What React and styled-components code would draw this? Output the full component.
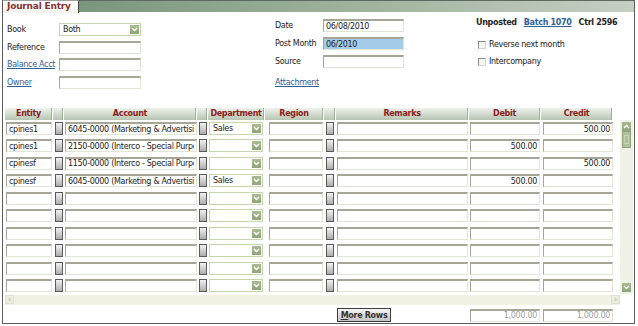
import React from "react";
import styled, { createGlobalStyle } from "styled-components";

const GlobalStyle = createGlobalStyle`
  body {
    margin: 0;
    background: #fff;
    font-family: "DejaVu Sans", Verdana, sans-serif;
  }
`;

const COLS = "47px 10px 132px 10px 56px 58px 11px 132px 71px 71px";

const Frame = styled.div`
  margin-left: 2px;
  width: 633px;
  height: 324px;
  box-sizing: border-box;
  border-left: 1px solid #5c5c5c;
  border-right: 1px solid #5c5c5c;
  border-bottom: 1px solid #5c5c5c;
  display: flex;
  flex-direction: column;
  font-size: 8px;
  letter-spacing: -0.3px;
  color: #222;
`;

const TabBar = styled.div`
  display: flex;
  height: 13px;
`;

const Tab = styled.div`
  width: 76px;
  box-sizing: border-box;
  border-top: 1px solid #a0a0a0;
  border-right: 1px solid #4a4a4a;
  background: linear-gradient(#ffffff, #f3f3ec);
  color: #8a3232;
  font-weight: bold;
  font-size: 9px;
  letter-spacing: -0.2px;
  line-height: 11px;
  padding-left: 4px;
`;

const Band = styled.div`
  flex: 1;
  height: 12px;
  box-sizing: border-box;
  border-top: 1px solid #5d6a5e;
  background: linear-gradient(90deg, #7b967e, #a3b5a1 55%, #c5d0c2);
`;

const Form = styled.div`
  height: 95px;
  display: flex;
  align-items: flex-start;
`;

const LeftCol = styled.div`
  margin-left: 4px;
  padding-top: 10px;
  display: grid;
  grid-template-columns: 52px 82px;
  grid-auto-rows: 13px;
  row-gap: 4.67px;
  align-items: center;
`;

const MidCol = styled.div`
  margin-left: 134px;
  padding-top: 6px;
  display: grid;
  grid-template-columns: 48px 81px;
  grid-auto-rows: 13px;
  row-gap: 5px;
  align-items: center;
`;

const RightCol = styled.div`
  margin-left: 72px;
  padding-top: 3px;
  display: flex;
  flex-direction: column;
`;

const Label = styled.span`
  white-space: nowrap;
`;

const Link = styled.a`
  color: #2f5f98;
  text-decoration: underline;
  white-space: nowrap;
  font-weight: ${(p) => (p.$bold ? "bold" : "normal")};
  cursor: pointer;
`;

const AttachRow = styled.div`
  grid-column: 1 / span 2;
  margin-top: 5px;
`;

const Status = styled.div`
  display: flex;
  gap: 7px;
  height: 12px;
  align-items: center;
  font-weight: bold;
  color: #1e1e1e;
`;

const CheckRow = styled.label`
  display: flex;
  align-items: center;
  gap: 3px;
  margin-left: 2px;
  height: 13px;
  margin-top: ${(p) => p.$mt}px;
`;

const Box = styled.span`
  width: 8px;
  height: 8px;
  box-sizing: border-box;
  border-top: 1px solid #8c8c8c;
  border-left: 1px solid #8c8c8c;
  border-right: 1px solid #d4d4d4;
  border-bottom: 1px solid #d4d4d4;
  background: #f7f7f4;
`;

const Field = styled.input`
  box-sizing: border-box;
  display: block;
  width: ${(p) => (p.$w ? `${p.$w}px` : "100%")};
  height: 13px;
  margin: 0 0 0 ${(p) => p.$ml || 0}px;
  padding: 0 2px;
  border-top: 2px solid #a6a696;
  border-left: 1px solid #a6a696;
  border-right: 1px solid #e0e6d4;
  border-bottom: 1px solid #e0e6d4;
  background: ${(p) => p.$bg || "#fff"};
  font-family: "DejaVu Sans", Verdana, sans-serif;
  font-size: 8px;
  letter-spacing: -0.3px;
  color: ${(p) => p.$muted ? "#a0a0a0" : "#222"};
  text-align: ${(p) => (p.$right ? "right" : "left")};
  outline: none;
`;

const Select = styled.div`
  box-sizing: border-box;
  width: ${(p) => p.$w}px;
  height: 13px;
  margin-left: ${(p) => p.$ml || 0}px;
  border: 1px solid #c5d5ae;
  background: #fff;
  display: flex;
  align-items: center;
  justify-content: space-between;
  padding-left: 3px;
  padding-right: 1px;
`;

const Arrow = styled.span`
  width: 9px;
  height: 9px;
  background: linear-gradient(#a9bb93, #8fa579);
  display: flex;
  align-items: center;
  justify-content: center;
`;

const Chevron = ({ up }) => (
  <svg width="7" height="5" viewBox="0 0 7 5">
    <polyline
      points={up ? "1,4 3.5,1.5 6,4" : "1,1 3.5,3.5 6,1"}
      fill="none"
      stroke="#fff"
      strokeWidth="1.4"
    />
  </svg>
);

const GridArea = styled.div`
  display: flex;
  align-items: flex-start;
  padding-left: 2px;
`;

const GridMain = styled.div`
  width: 607px;
`;

const HeadRow = styled.div`
  display: grid;
  grid-template-columns: ${COLS};
  column-gap: 1px;
  height: 12px;
`;

const HeadCell = styled.div`
  background: linear-gradient(#eef2eb, #b7c5b2);
  box-shadow: inset -1px 0 #9eac9a;
  color: #8b1c1c;
  font-weight: bold;
  text-align: center;
  line-height: 12px;
  white-space: nowrap;
  overflow: hidden;
`;

const Body = styled.div`
  margin-top: 2px;
  display: grid;
  grid-auto-rows: 17.44px;
  height: 170px;
`;

const Row = styled.div`
  display: grid;
  grid-template-columns: ${COLS};
  column-gap: 1px;
  align-items: start;
`;

const Lookup = styled.span`
  display: block;
  width: 8px;
  height: 13px;
  margin-left: 2px;
  box-sizing: border-box;
  border: 1px solid #5a5a5a;
  background: linear-gradient(#f2f2f2, #adadad);
`;

const VScroll = styled.div`
  width: 13px;
  height: 174px;
  margin-left: 8px;
  margin-top: 12px;
  background: #f0f2e8;
  box-sizing: border-box;
  padding: 2px 0 2px 2px;
  display: flex;
  flex-direction: column;
  justify-content: space-between;
`;

const ScrollBtn = styled.span`
  width: 9px;
  height: 9px;
  background: linear-gradient(#a7b991, #8ea37a);
  display: flex;
  align-items: center;
  justify-content: center;
`;

const Thumb = styled.span`
  display: flex;
  align-items: center;
  justify-content: center;
  width: 9px;
  height: 17px;
  box-sizing: border-box;
  border: 1px solid #93a580;
  background: #aebf99;
`;

const Grip = styled.span`
  width: 5px;
  height: 9px;
  border: 1px solid #c8d4b8;
  box-sizing: border-box;
`;

const HScroll = styled.div`
  margin-top: 1px;
  margin-left: 2px;
  width: 615px;
  height: 10px;
  background: #f1f1e4;
  display: flex;
  justify-content: space-between;
`;

const HBtn = styled.span`
  width: 9px;
  height: 9px;
  box-sizing: border-box;
  border: 1px solid #e0e0d2;
  background: #ececdf;
  color: #b0b0a4;
  font-size: 8px;
  line-height: 7px;
  text-align: center;
`;

const Footer = styled.div`
  margin-top: 3px;
  padding-left: 2px;
  display: grid;
  grid-template-columns: ${COLS};
  column-gap: 1px;
  align-items: center;
`;

const MoreButton = styled.button`
  grid-column: 8;
  width: 54px;
  height: 14px;
  margin-left: 1px;
  padding: 0;
  box-sizing: border-box;
  border: 1px solid #3c3c3c;
  background: linear-gradient(#f6f6f6, #c4c4c4);
  font-family: "DejaVu Sans", Verdana, sans-serif;
  font-size: 8px;
  font-weight: bold;
  letter-spacing: -0.3px;
  color: #333;
  u {
    text-decoration: underline;
  }
`;

const headers = ["Entity", "", "Account", "", "Department", "Region", "", "Remarks", "Debit", "Credit"];

const rows = [
  { entity: "cpines1", account: "6045-0000 (Marketing & Advertising)", dept: "Sales", debit: "", credit: "500.00" },
  { entity: "cpines1", account: "2150-0000 (Interco - Special Purpose)", dept: "", debit: "500.00", credit: "" },
  { entity: "cpinesf", account: "1150-0000 (Interco - Special Purpose)", dept: "", debit: "", credit: "500.00" },
  { entity: "cpinesf", account: "6045-0000 (Marketing & Advertising)", dept: "Sales", debit: "500.00", credit: "" },
  ...Array.from({ length: 6 }, () => ({ entity: "", account: "", dept: "", debit: "", credit: "" })),
];

export default function App() {
  return (
    <>
      <GlobalStyle />
      <Frame>
        <TabBar>
          <Tab>Journal Entry</Tab>
          <Band />
        </TabBar>

        <Form>
          <LeftCol>
            <Label>Book</Label>
            <Select $w={82}>
              <span>Both</span>
              <Arrow><Chevron /></Arrow>
            </Select>
            <Label>Reference</Label>
            <Field readOnly value="" />
            <Link>Balance Acct</Link>
            <Field readOnly value="" />
            <Link>Owner</Link>
            <Field readOnly value="" />
          </LeftCol>

          <MidCol>
            <Label>Date</Label>
            <Field readOnly value="06/08/2010" />
            <Label>Post Month</Label>
            <Field readOnly value="06/2010" $bg="#a3cde9" />
            <Label>Source</Label>
            <Field readOnly value="" />
            <AttachRow>
              <Link>Attachment</Link>
            </AttachRow>
          </MidCol>

          <RightCol>
            <Status>
              <span>Unposted</span>
              <Link $bold>Batch 1070</Link>
              <span>Ctrl 2596</span>
            </Status>
            <CheckRow $mt={10}>
              <Box />
              <span>Reverse next month</span>
            </CheckRow>
            <CheckRow $mt={4}>
              <Box />
              <span>Intercompany</span>
            </CheckRow>
          </RightCol>
        </Form>

        <GridArea>
          <GridMain>
            <HeadRow>
              {headers.map((h, i) => (
                <HeadCell key={i}>{h}</HeadCell>
              ))}
            </HeadRow>
            <Body>
              {rows.map((r, i) => (
                <Row key={i}>
                  <Field readOnly value={r.entity} $ml={1} $w={46} />
                  <Lookup />
                  <Field readOnly value={r.account} $ml={1} $w={132} />
                  <Lookup />
                  <Select $w={54} $ml={1}>
                    <span>{r.dept}</span>
                    <Arrow><Chevron /></Arrow>
                  </Select>
                  <Field readOnly value="" $ml={4} $w={54} />
                  <Lookup />
                  <Field readOnly value="" $ml={1} $w={131} />
                  <Field readOnly value={r.debit} $ml={1} $w={70} $right />
                  <Field readOnly value={r.credit} $ml={2} $w={70} $right />
                </Row>
              ))}
            </Body>
          </GridMain>
          <VScroll>
            <div>
              <ScrollBtn><Chevron up /></ScrollBtn>
              <Thumb><Grip /></Thumb>
            </div>
            <ScrollBtn><Chevron /></ScrollBtn>
          </VScroll>
        </GridArea>

        <HScroll>
          <HBtn>‹</HBtn>
          <HBtn>›</HBtn>
        </HScroll>

        <Footer>
          <MoreButton>
            <u>M</u>ore Rows
          </MoreButton>
          <Field readOnly value="1,000.00" $ml={1} $w={70} $right $muted />
          <Field readOnly value="1,000.00" $ml={2} $w={70} $right $muted />
        </Footer>
      </Frame>
    </>
  );
}
